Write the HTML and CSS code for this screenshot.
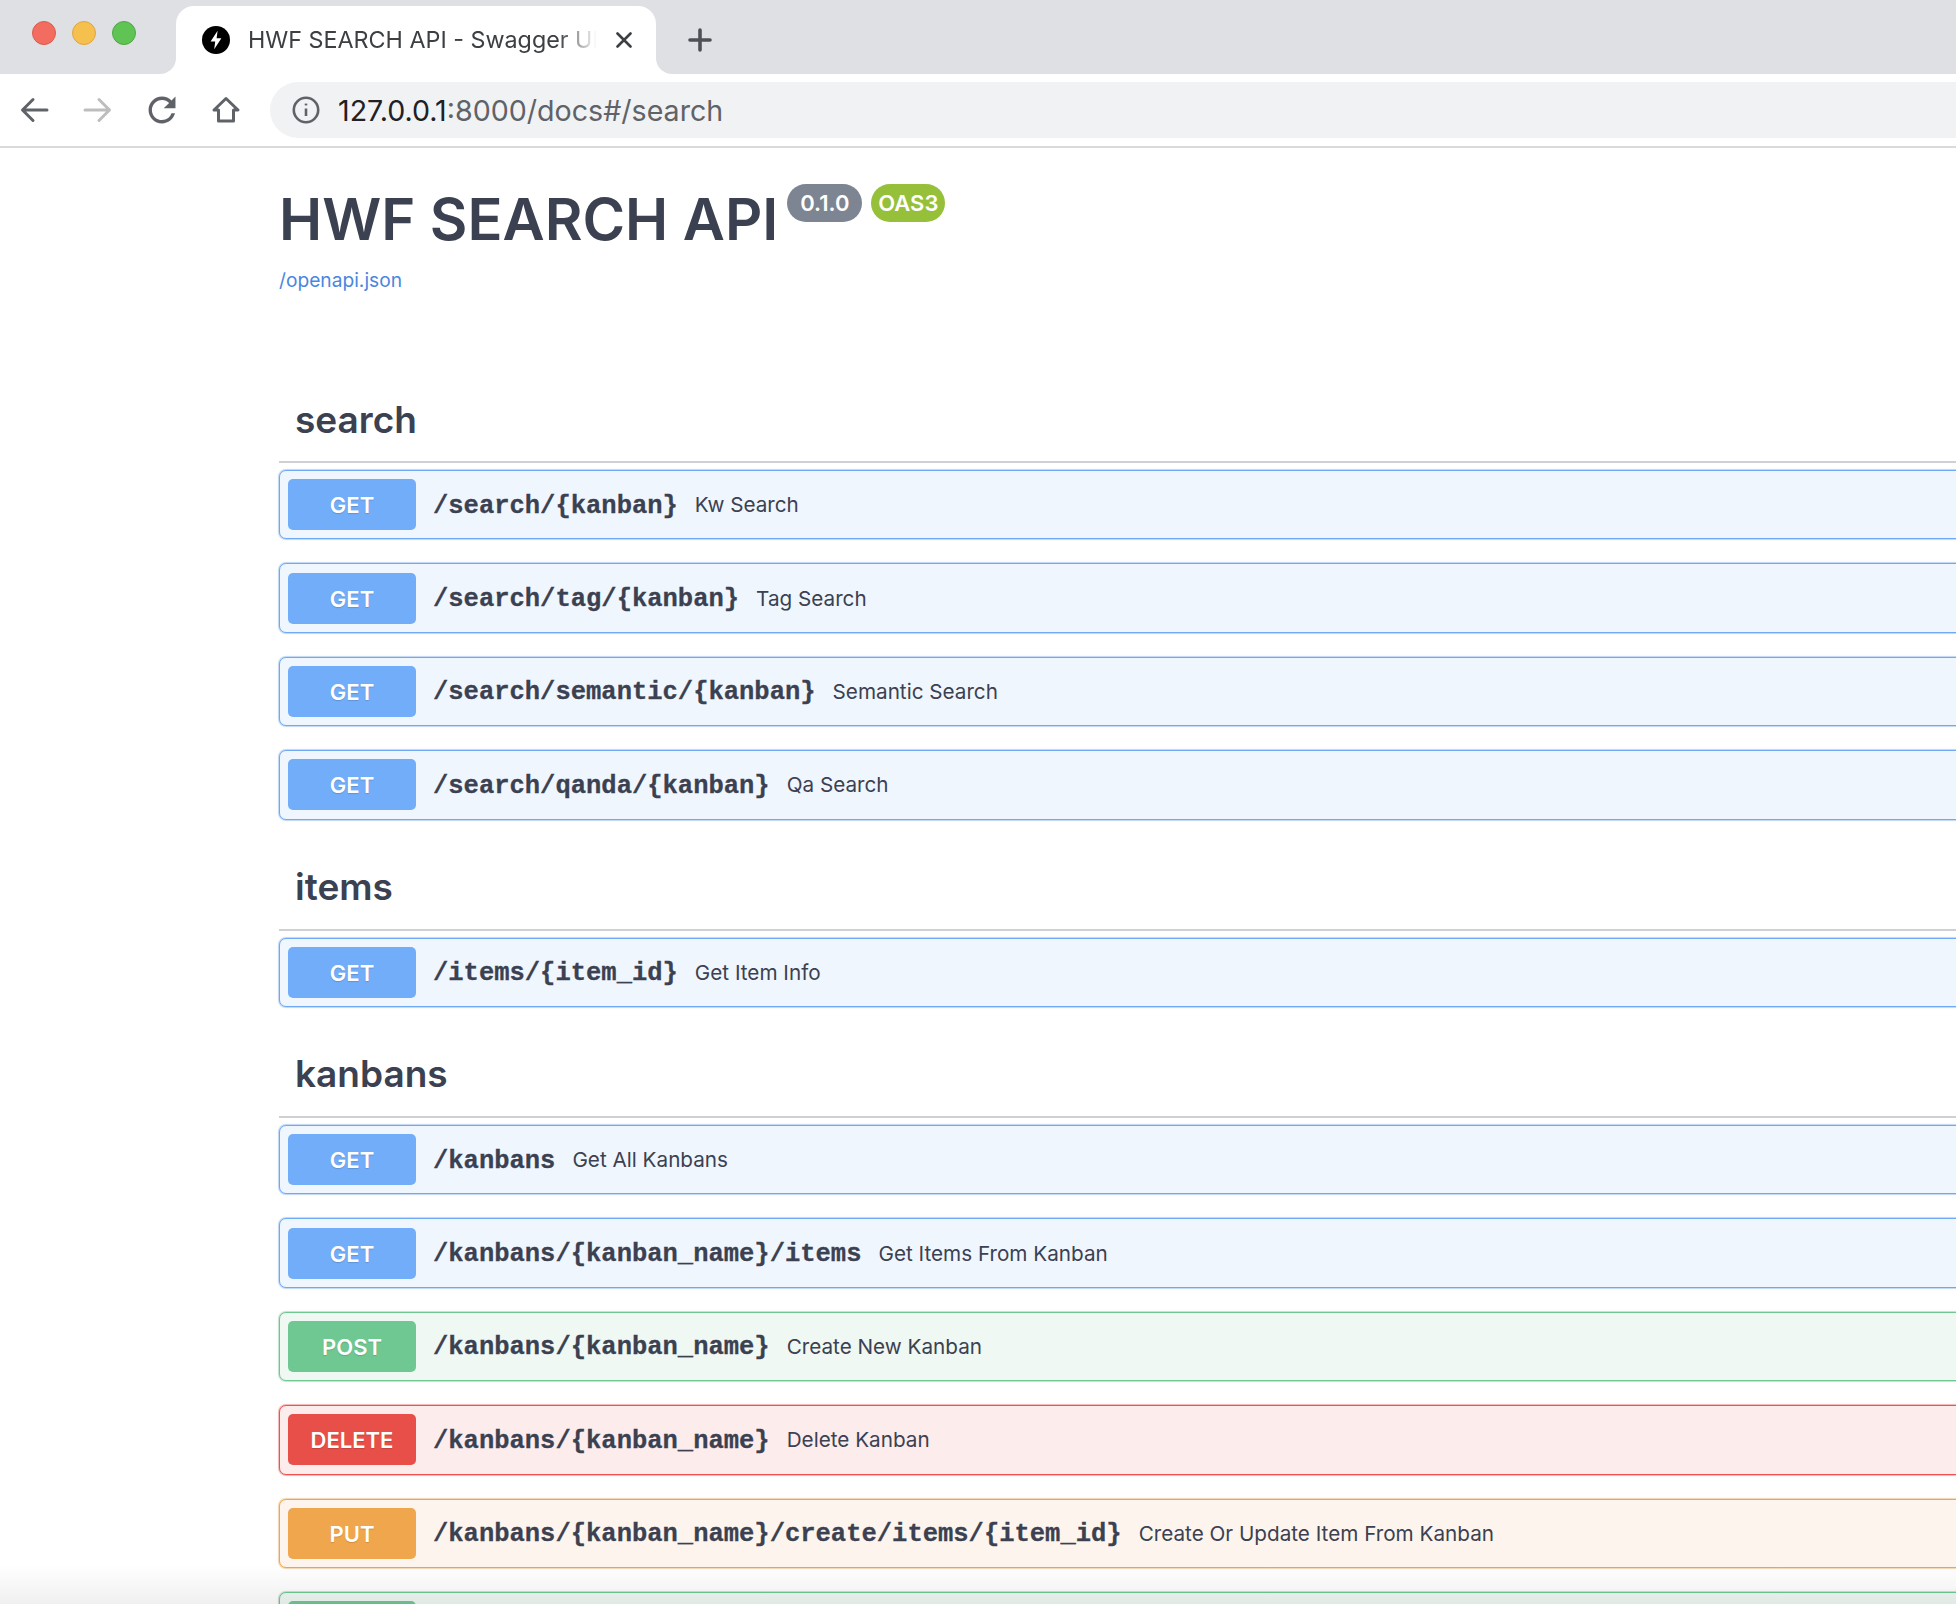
FILE: index.html
```html
<!DOCTYPE html>
<html lang="en">
<head>
	<meta charset="utf-8">
	<title>HWF SEARCH API - Swagger UI</title>
	<link rel="stylesheet" href="styles.css">
</head>
<body>
	<div class="tabstrip">
		<div class="lights">
			<span class="light red"></span>
			<span class="light yellow"></span>
			<span class="light green"></span>
		</div>
		<div class="tab">
			<svg class="favicon" viewBox="0 0 28 28">
				<circle cx="14" cy="14" r="14" fill="#000"/>
				<polygon points="15.6,4.8 8.6,15.6 13.2,15.6 12.2,23.2 19.4,12.2 14.6,12.2" fill="#fff"/>
			</svg>
			<span class="tab-title">HWF SEARCH API - Swagger UI</span>
			<svg class="tab-close" viewBox="0 0 16 16">
				<path d="M1.5 1.5L14.5 14.5M14.5 1.5L1.5 14.5"/>
			</svg>
		</div>
		<svg class="new-tab" viewBox="0 0 24 24">
			<path d="M12 2V22M2 12H22"/>
		</svg>
	</div>

	<div class="toolbar">
		<svg class="tool" viewBox="0 0 32 32"><path d="M29 16H5M15 5.5L4.5 16L15 26.5"/></svg>
		<svg class="tool disabled" viewBox="0 0 32 32"><path d="M3 16H27M17 5.5L27.5 16L17 26.5"/></svg>
		<svg class="tool" viewBox="2.5 2.5 19 19"><path class="solid" d="M17.65 6.35A7.958 7.958 0 0 0 12 4c-4.42 0-7.99 3.58-7.99 8s3.57 8 7.99 8c3.73 0 6.84-2.55 7.73-6h-2.08A5.99 5.99 0 0 1 12 18c-3.31 0-6-2.69-6-6s2.69-6 6-6c1.66 0 3.14.69 4.22 1.78L13 11h7V4l-2.35 2.35z"/></svg>
		<svg class="tool" viewBox="0 0 32 32"><path d="M8.5 16H4L16 4.5L28 16H23.5V27H8.5Z"/></svg>
		<div class="address">
			<svg class="info" viewBox="0 0 28 28">
				<circle cx="14" cy="14" r="12.2"/>
				<path d="M14 12.5V20"/>
				<path d="M14 7.6V9.4"/>
			</svg>
			<span class="url">127.0.0.1<span class="url-rest">:8000/docs#/search</span></span>
		</div>
	</div>

	<div id="wrapper">
		<div class="info-head">
			<h1>HWF SEARCH API</h1>
			<span class="badge version">0.1.0</span>
			<span class="badge oas">OAS3</span>
		</div>
		<a class="spec-link" href="#">/openapi.json</a>

		<h3 class="tag first">search</h3>
		<div class="op get"><span class="method">GET</span><span class="path">/search/{kanban}</span><span class="desc">Kw Search</span></div>
		<div class="op get"><span class="method">GET</span><span class="path">/search/tag/{kanban}</span><span class="desc">Tag Search</span></div>
		<div class="op get"><span class="method">GET</span><span class="path">/search/semantic/{kanban}</span><span class="desc">Semantic Search</span></div>
		<div class="op get"><span class="method">GET</span><span class="path">/search/qanda/{kanban}</span><span class="desc">Qa Search</span></div>

		<h3 class="tag">items</h3>
		<div class="op get"><span class="method">GET</span><span class="path">/items/{item_id}</span><span class="desc">Get Item Info</span></div>

		<h3 class="tag">kanbans</h3>
		<div class="op get"><span class="method">GET</span><span class="path">/kanbans</span><span class="desc">Get All Kanbans</span></div>
		<div class="op get"><span class="method">GET</span><span class="path">/kanbans/{kanban_name}/items</span><span class="desc">Get Items From Kanban</span></div>
		<div class="op post"><span class="method">POST</span><span class="path">/kanbans/{kanban_name}</span><span class="desc">Create New Kanban</span></div>
		<div class="op delete"><span class="method">DELETE</span><span class="path">/kanbans/{kanban_name}</span><span class="desc">Delete Kanban</span></div>
		<div class="op put"><span class="method">PUT</span><span class="path">/kanbans/{kanban_name}/create/items/{item_id}</span><span class="desc">Create Or Update Item From Kanban</span></div>
		<div class="op post"><span class="method"></span></div>
	</div>

	<div class="bottom-shade"></div>
</body>
</html>
```

FILE: styles.css
```css
html, body {
	height: 100%;
}

body {
	margin: 0;
	position: relative;
	overflow: hidden;
	background-color: #fff;
	color: #3b4151;
	font-family: Inter, "Liberation Sans", sans-serif;
}

/* Browser chrome */
.tabstrip {
	display: flex;
	align-items: flex-start;
	height: 74px;
	background-color: #dfe0e4;
}

.lights {
	display: flex;
	gap: 16px;
	width: 176px;
	padding: 21px 0 0 32px;
	box-sizing: border-box;
}

.light {
	width: 24px;
	height: 24px;
	border-radius: 50%;
	box-sizing: border-box;
	border: 1px solid;
}

.red { background-color: #f36c60; border-color: #dc5a4e; }
.yellow { background-color: #f6c04f; border-color: #dfa63c; }
.green { background-color: #5fc454; border-color: #4ea942; }

.tab {
	position: relative;
	display: flex;
	align-items: center;
	width: 480px;
	height: 68px;
	margin-top: 6px;
	padding-left: 26px;
	box-sizing: border-box;
	background-color: #fff;
	border-radius: 18px 18px 0 0;
}

.tab::before, .tab::after {
	content: "";
	position: absolute;
	bottom: 0;
	width: 16px;
	height: 16px;
	background-color: #dfe0e4;
}

.tab::before {
	left: -16px;
	border-bottom-right-radius: 16px;
	box-shadow: 6px 6px 0 6px #fff;
	clip-path: inset(0 0 0 0);
}

.tab::after {
	right: -16px;
	border-bottom-left-radius: 16px;
	box-shadow: -6px 6px 0 6px #fff;
	clip-path: inset(0 0 0 0);
}

.favicon {
	width: 28px;
	height: 28px;
	flex: none;
}

.tab-title {
	width: 349px;
	margin-left: 18px;
	padding-bottom: 2px;
	overflow: hidden;
	white-space: nowrap;
	font-size: 23.3px;
	color: #3c4043;
	-webkit-mask-image: linear-gradient(to right, #000 89%, transparent 100%);
	mask-image: linear-gradient(to right, #000 89%, transparent 100%);
}

.tab-close {
	width: 16px;
	height: 16px;
	flex: none;
	margin-left: 19px;
	fill: none;
	stroke: #3c4043;
	stroke-width: 2.6;
	stroke-linecap: round;
}

.new-tab {
	width: 24px;
	height: 24px;
	margin: 28px 0 0 32px;
	fill: none;
	stroke: #4d5156;
	stroke-width: 3.6;
	stroke-linecap: round;
}

.toolbar {
	display: flex;
	align-items: center;
	gap: 32px;
	height: 72px;
	padding-left: 18px;
	box-sizing: border-box;
	background-color: #fff;
}

.tool {
	width: 32px;
	height: 32px;
	flex: none;
	fill: none;
	stroke: #5f6368;
	stroke-width: 3;
	stroke-linejoin: round;
	stroke-linecap: round;
}

.tool.disabled { stroke: #bdbdbd; }

.tool .solid {
	fill: #5f6368;
	stroke: none;
}

.address {
	display: flex;
	align-items: center;
	flex: 1;
	height: 56px;
	margin-left: -4px;
	padding-left: 22px;
	background-color: #f1f2f4;
	border-radius: 28px 0 0 28px;
}

.info {
	width: 28px;
	height: 28px;
	flex: none;
	fill: none;
	stroke: #5f6368;
	stroke-width: 2.6;
}

.url {
	margin-left: 18px;
	font-size: 28.6px;
	color: #202124;
}

.url-rest { color: #5f6368; }

/* Swagger page */
#wrapper {
	width: 1900px;
	padding-left: 279px;
	border-top: 2px solid #dadada;
}

.info-head {
	display: flex;
	align-items: flex-start;
	height: 82.5px;
	padding-top: 36px;
}

h1 {
	margin: 2px 9px 0 0;
	font-size: 57.9px;
	line-height: 66px;
	font-weight: 600;
	white-space: nowrap;
}

.badge {
	height: 38px;
	line-height: 39px;
	margin-right: 9px;
	border-radius: 19px;
	color: #fff;
	font-size: 22px;
	font-weight: 600;
	text-align: center;
}

.version { width: 75px; background-color: #7d8492; }
.oas { width: 74px; background-color: #96bf3a; }

.spec-link {
	display: block;
	height: 109.5px;
	font-size: 19.2px;
	line-height: 26px;
	color: #4a86e0;
	text-decoration: none;
}

.tag {
	display: flex;
	align-items: center;
	height: 87px;
	margin: 0 0 7px 0;
	padding: 1px 0 0 16px;
	box-sizing: border-box;
	border-bottom: 2px solid #cfd0d3;
	font-size: 37px;
	font-weight: 600;
}

.op {
	display: flex;
	align-items: center;
	height: 69.4px;
	margin-bottom: 24px;
	padding-left: 8px;
	box-sizing: border-box;
	border: 1px solid;
	border-radius: 7px;
}

.method {
	flex: none;
	width: 128px;
	height: 51px;
	line-height: 52px;
	border-radius: 5px;
	color: #fff;
	font-size: 22px;
	font-weight: 600;
	text-align: center;
	text-shadow: 0 1px 1px rgba(0, 0, 0, 0.15);
}

.path {
	margin-left: 17px;
	padding-top: 3px;
	font-family: "Liberation Mono", monospace;
	font-size: 25.5px;
	font-weight: bold;
	-webkit-text-stroke: 0.3px #3b4151;
	white-space: nowrap;
}

.desc {
	margin-left: 17px;
	font-size: 20.7px;
	white-space: nowrap;
}

.get { background-color: #f0f6fe; border-color: #6ea9f6; box-shadow: 0 0 0 1px rgba(110, 169, 246, 0.35), 0 0 3px rgba(0, 0, 0, 0.12); }
.get .method { background-color: #72adf9; }

.post { background-color: #eff8f3; border-color: #6fc892; box-shadow: 0 0 0 1px rgba(111, 200, 146, 0.35), 0 0 3px rgba(0, 0, 0, 0.12); }
.post .method { background-color: #6fc892; }

.delete { background-color: #fcecec; border-color: #ee5351; box-shadow: 0 0 0 1px rgba(238, 83, 81, 0.35), 0 0 3px rgba(0, 0, 0, 0.12); }
.delete .method { background-color: #e84f49; }

.put { background-color: #fdf5ed; border-color: #f0a64c; box-shadow: 0 0 0 1px rgba(240, 166, 76, 0.35), 0 0 3px rgba(0, 0, 0, 0.12); }
.put .method { background-color: #f0a64c; }

.bottom-shade {
	position: absolute;
	left: 0;
	right: 0;
	bottom: 0;
	height: 40px;
	background: linear-gradient(to top, rgba(0, 0, 0, 0.06), rgba(0, 0, 0, 0));
}
```
